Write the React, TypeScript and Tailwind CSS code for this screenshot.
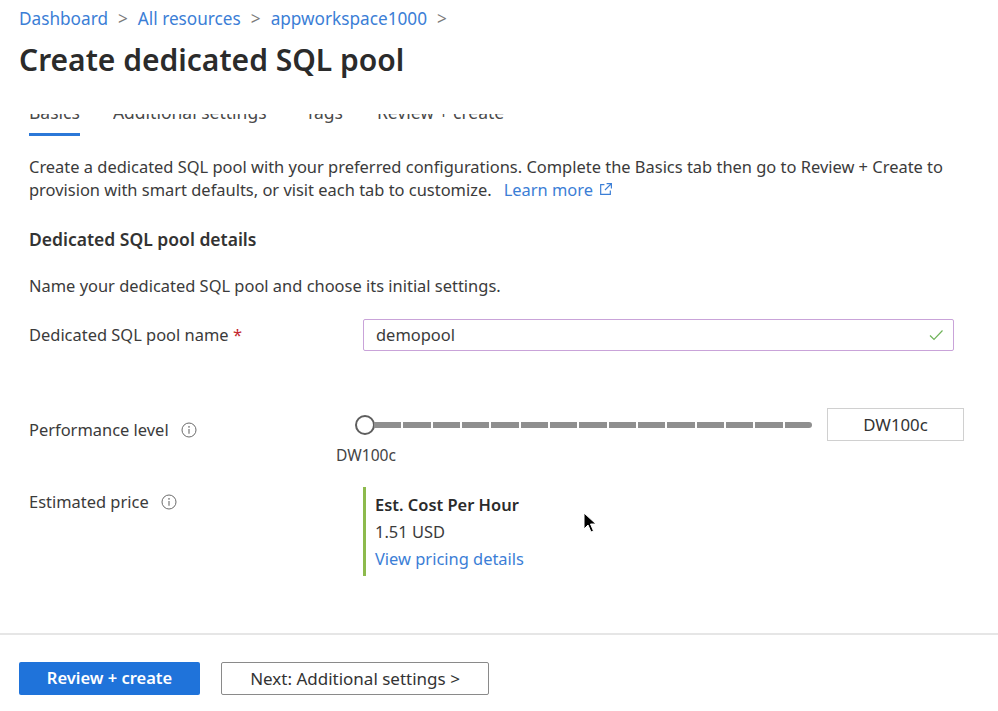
import React from "react";

const InfoIcon = () => (
  <svg width="16" height="16" viewBox="0 0 16 16" fill="none">
    <circle cx="8" cy="8" r="7" stroke="#6b6b6b" strokeWidth="1" />
    <circle cx="8" cy="4.9" r="0.8" fill="#6b6b6b" />
    <path d="M8 7v4.8" stroke="#6b6b6b" strokeWidth="1.1" />
  </svg>
);

const Chevron = () => <span className="mx-[10px] text-[#7a7a7a]">&gt;</span>;

const FormRow = ({
  label,
  children,
  className = "",
}: {
  label: React.ReactNode;
  children: React.ReactNode;
  className?: string;
}) => (
  <div className={`flex ${className}`}>
    <div className="w-[334px] shrink-0 flex items-center gap-x-[12px]">{label}</div>
    <div className="flex-1">{children}</div>
  </div>
);

const segments = Array.from({ length: 15 });

const App = () => {
  return (
    <div
      className="relative w-[998px] h-[711px] bg-white overflow-hidden text-[#333333]"
      style={{ fontFamily: '"Noto Sans", "Open Sans", sans-serif' }}
    >
      {/* header */}
      <div className="px-[19px] pt-[7px]">
        <div className="flex items-center text-[17.2px] leading-[24px] text-[#3b7ed6]">
          <span>Dashboard</span>
          <Chevron />
          <span>All resources</span>
          <Chevron />
          <span>appworkspace1000</span>
          <Chevron />
        </div>
        <h1 className="mt-[10px] text-[30px] leading-[38px] font-semibold text-[#2b2b2b]">
          Create dedicated SQL pool
        </h1>
      </div>

      {/* tabs, scrolled so only the lower part shows */}
      <div className="mt-[35px] px-[29px] flex text-[17.5px] text-[#4a4a4a]">
        {[
          { t: "Basics", m: "" },
          { t: "Additional settings", m: "ml-[33px]" },
          { t: "Tags", m: "ml-[39px]" },
          { t: "Review + create", m: "ml-[34px]" },
        ].map(({ t, m }, i) => (
          <div key={t} className={`flex flex-col ${m}`}>
            <div className="h-[11px] overflow-hidden">
              <div className="-mt-[12px] leading-[20px] whitespace-nowrap">{t}</div>
            </div>
            <div className={`mt-[8px] h-[3px] ${i === 0 ? "bg-[#2b78d8]" : "bg-transparent"}`}></div>
          </div>
        ))}
      </div>

      {/* body */}
      <div className="px-[29px] text-[16.45px] text-[#3b3b3b]">
        <p className="mt-[19px] leading-[23px]">
          Create a dedicated SQL pool with your preferred configurations. Complete the Basics tab then go to Review + Create to
          provision with smart defaults, or visit each tab to customize.
          <span className="ml-[12px] text-[#3b7ed6] inline-flex items-center gap-x-[5px]">
            Learn more
            <svg width="15" height="15" viewBox="0 0 14 14" fill="none">
              <path d="M6 2.5H2.5v9h9V8" stroke="#3b7ed6" strokeWidth="1.1" />
              <path d="M8 1.5h4.5V6M12.5 1.5L6.5 7.5" stroke="#3b7ed6" strokeWidth="1.1" />
            </svg>
          </span>
        </p>

        <h2 className="mt-[26px] text-[17.5px] leading-[24px] font-semibold text-[#333333]">
          Dedicated SQL pool details
        </h2>
        <p className="mt-[23px] leading-[24px]">Name your dedicated SQL pool and choose its initial settings.</p>

        <FormRow
          className="mt-[21px]"
          label={
            <span>
              Dedicated SQL pool name <span className="text-[#c4262e]">*</span>
            </span>
          }
        >
          <div className="w-[591px] h-[32px] border border-[#c9a3d9] rounded-[2px] flex items-center justify-between pl-[12px] pr-[8px]">
            <span>demopool</span>
            <svg width="18" height="18" viewBox="0 0 18 18" fill="none">
              <path d="M3 9.5l4 4 8.5-9" stroke="#6fb35a" strokeWidth="1.2" />
            </svg>
          </div>
        </FormRow>

        {/* performance level */}
        <div className="mt-[57px] flex">
          <div className="w-[334px] shrink-0 mt-[10px] h-[24px] flex items-center gap-x-[12px]">
            <span>Performance level</span>
            <InfoIcon />
          </div>
          <div className="flex items-start -ml-[8px]">
            <div className="flex flex-col">
              <div className="h-[33px] flex items-center">
                <div className="w-[20px] h-[20px] rounded-full border-2 border-[#5e5e5e] bg-white shrink-0"></div>
                <div className="flex gap-x-[2px] w-[438px] -ml-[1px]">
                  {segments.map((_, i) => (
                    <div
                      key={i}
                      className={`flex-1 h-[6px] bg-[#8f8f8f] ${i === 14 ? "rounded-r-full" : ""}`}
                    ></div>
                  ))}
                </div>
              </div>
              <div className="mt-[4px] -ml-[19px] text-[15.6px] leading-[20px] text-[#444444]">DW100c</div>
            </div>
            <div className="ml-[15px] w-[137px] h-[33px] border border-[#d0d0d0] flex items-center justify-center text-[16.8px] text-[#333333]">
              DW100c
            </div>
          </div>
        </div>

        {/* estimated price */}
        <div className="mt-[22px] flex">
          <div className="w-[334px] shrink-0 mt-[3px] h-[24px] flex items-center gap-x-[12px]">
            <span>Estimated price</span>
            <InfoIcon />
          </div>
          <div className="border-l-[3px] border-[#8dba4d] pl-[9px] pt-[4px] pb-[4px] leading-[27px]">
            <div className="font-semibold text-[#2b2b2b]">Est. Cost Per Hour</div>
            <div>1.51 USD</div>
            <div className="text-[#3b7ed6]">View pricing details</div>
          </div>
        </div>
      </div>

      {/* footer */}
      <div className="mt-[57px] border-t-2 border-[#e6e6e6]"></div>
      <div className="px-[19px] mt-[27px] flex gap-x-[21px]">
        <button className="w-[181px] h-[33px] bg-[#1f73da] text-white text-[16.5px] font-semibold rounded-[2px]">
          Review + create
        </button>
        <button className="w-[268px] h-[33px] bg-white border border-[#8a8a8a] text-[#333333] text-[17px] rounded-[2px]">
          Next: Additional settings &gt;
        </button>
      </div>

      {/* mouse pointer */}
      <svg className="absolute left-[583px] top-[512px]" width="14" height="22" viewBox="0 0 14 22">
        <path d="M1 1v16l4-4 3 7 2.5-1-3-7h5.5z" fill="#000" stroke="#fff" strokeWidth="1" />
      </svg>
    </div>
  );
};

export default App;
